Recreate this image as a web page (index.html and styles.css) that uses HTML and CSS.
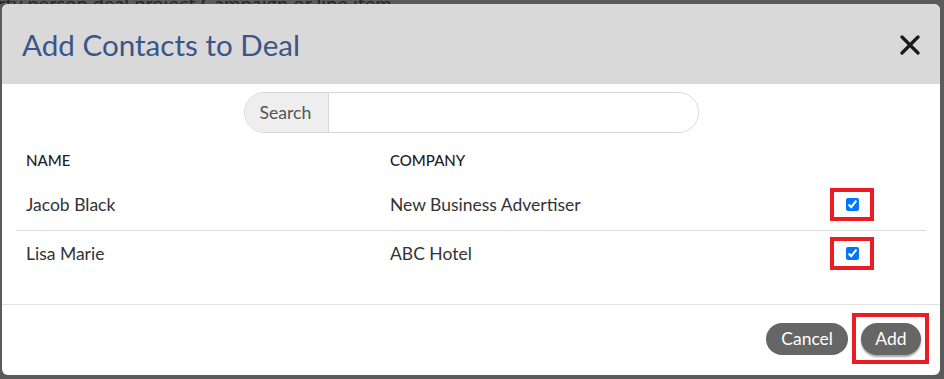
FILE: index.html
```html
<!DOCTYPE html>
<html lang="en">
<head>
    <meta charset="UTF-8">
    <meta name="viewport" content="width=device-width, initial-scale=1.0">
    <title>Add Contacts to Deal</title>
    <link rel="stylesheet" href="styles.css">
</head>
<body>
    <div class="page-strip">
        <span class="page-text">rty person deal project Campaign or line item</span>
    </div>

    <div class="modal">
        <div class="modal-header">
            <h2 class="modal-title">Add Contacts to Deal</h2>
            <button class="close-button" aria-label="Close">
                <svg width="20" height="20" viewBox="0 0 20 20">
                    <path d="M2 2 L18 18 M18 2 L2 18" stroke="#1a1a1a" stroke-width="3.2" stroke-linecap="round"/>
                </svg>
            </button>
        </div>

        <div class="modal-body">
            <div class="search-group">
                <span class="search-label">Search</span>
                <input class="search-input" type="text">
            </div>

            <table class="contact-table">
                <thead>
                    <tr>
                        <th class="col-name">Name</th>
                        <th class="col-company">Company</th>
                        <th class="col-check"></th>
                    </tr>
                </thead>
                <tbody>
                    <tr class="first-row">
                        <td>Jacob Black</td>
                        <td>New Business Advertiser</td>
                        <td class="check-cell"><span class="highlight-box"><input type="checkbox" checked></span></td>
                    </tr>
                    <tr class="second-row">
                        <td>Lisa Marie</td>
                        <td>ABC Hotel</td>
                        <td class="check-cell"><span class="highlight-box"><input type="checkbox" checked></span></td>
                    </tr>
                </tbody>
            </table>
        </div>

        <div class="modal-footer">
            <button class="btn">Cancel</button>
            <span class="highlight-box add-box"><button class="btn btn-add">Add</button></span>
        </div>
    </div>
</body>
</html>
```

FILE: styles.css
```css
* {
    margin: 0;
    padding: 0;
    box-sizing: border-box;
}

body {
    font-family: Lato, 'Open Sans', sans-serif;
    background: #5b5b5b;
    width: 944px;
    height: 379px;
    overflow: hidden;
}

.page-strip {
    height: 4px;
    overflow: hidden;
    display: flex;
    align-items: flex-end;
}

.page-text {
    display: block;
    font-size: 20px;
    line-height: 20px;
    color: #262626;
    margin-left: -2px;
    transform: translateY(9px);
    white-space: nowrap;
}

.modal {
    margin-left: 2px;
    width: 938px;
    background: #fff;
    border-radius: 6px;
    overflow: hidden;
}

.modal-header {
    height: 80px;
    background: #d9d9d9;
    display: flex;
    align-items: center;
    justify-content: space-between;
    padding: 0 20px 0 20px;
}

.modal-title {
    font-size: 29.6px;
    font-weight: 400;
    color: #3a5589;
    padding-top: 1px;
}

.close-button {
    border: none;
    background: none;
    width: 20px;
    height: 20px;
    display: flex;
    margin-top: 2px;
}

.modal-body {
    padding: 8px 14px 27px;
}

.search-group {
    display: flex;
    width: 455px;
    height: 41px;
    margin: 0 auto;
    border: 1px solid #d6d6d6;
    border-radius: 21px;
    overflow: hidden;
}

.search-label {
    width: 84px;
    background: #eeeeee;
    border-right: 1px solid #d6d6d6;
    color: #555;
    font-size: 17.6px;
    display: flex;
    align-items: center;
    padding-left: 15px;
}

.search-input {
    flex: 1;
    border: none;
    outline: none;
}

.contact-table {
    width: 910px;
    margin-top: 10px;
    border-collapse: collapse;
    table-layout: fixed;
    color: #333;
}

.contact-table th {
    height: 36px;
    font-size: 15px;
    font-weight: 500;
    text-transform: uppercase;
    text-align: left;
    padding: 0 10px 3px;
    color: #222;
}

.col-name {
    width: 364px;
}

.col-company {
    width: 450px;
}

.col-check {
    width: 96px;
}

.contact-table td {
    height: 51px;
    font-size: 17.5px;
    padding: 0 10px;
    vertical-align: middle;
}

.first-row td {
    border-bottom: 1px solid #dddddd;
}

.second-row td {
    height: 47px;
}

.contact-table .check-cell {
    padding: 0;
}

.highlight-box {
    display: inline-flex;
    align-items: center;
    justify-content: center;
    border: 4px solid #ec1c24;
}

.check-cell .highlight-box {
    width: 44px;
    height: 33px;
}

.check-cell input {
    width: 13px;
    height: 13px;
    margin: 0;
}

.modal-footer {
    height: 71px;
    border-top: 1px solid #e2e2e2;
    display: flex;
    align-items: center;
    justify-content: flex-end;
    gap: 4px;
    padding-right: 11px;
    padding-bottom: 3px;
}

.btn {
    height: 32px;
    padding: 0 15px;
    border: none;
    border-radius: 16px;
    background: #666;
    color: #fff;
    font-family: Lato, 'Open Sans', sans-serif;
    font-size: 17.5px;
}

.add-box {
    width: 77px;
    height: 51px;
    padding-left: 1px;
}

.btn-add {
    width: 60px;
    padding: 0;
    box-shadow: 0 2px 2px rgba(0, 0, 0, 0.35);
}
```
